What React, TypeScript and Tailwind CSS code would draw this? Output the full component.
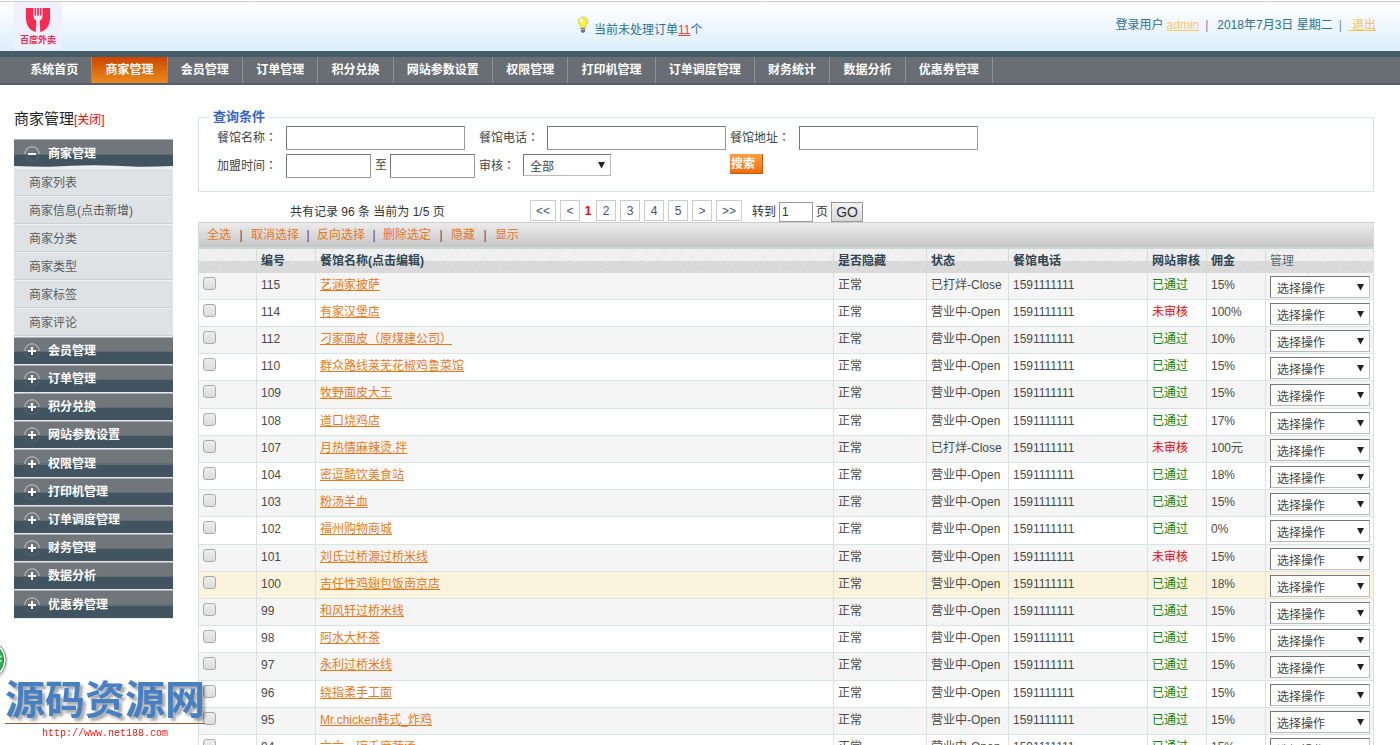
import type { ReactNode } from 'react';

const navItems = [
  '系统首页',
  '商家管理',
  '会员管理',
  '订单管理',
  '积分兑换',
  '网站参数设置',
  '权限管理',
  '打印机管理',
  '订单调度管理',
  '财务统计',
  '数据分析',
  '优惠券管理',
];

const subMenu = ['商家列表', '商家信息(点击新增)', '商家分类', '商家类型', '商家标签', '商家评论'];

const sections = [
  '会员管理',
  '订单管理',
  '积分兑换',
  '网站参数设置',
  '权限管理',
  '打印机管理',
  '订单调度管理',
  '财务管理',
  '数据分析',
  '优惠券管理',
];

type Shop = { id: number; name: string; open: boolean; approved: boolean; fee: string };

const shops: Shop[] = [
  { id: 115, name: '艺涵家披萨', open: false, approved: true, fee: '15%' },
  { id: 114, name: '有家汉堡店', open: true, approved: false, fee: '100%' },
  { id: 112, name: '刁家面皮（原煤建公司）', open: true, approved: true, fee: '10%' },
  { id: 110, name: '群众路线莱芜花椒鸡鲁菜馆', open: true, approved: true, fee: '15%' },
  { id: 109, name: '牧野面皮大王', open: true, approved: true, fee: '15%' },
  { id: 108, name: '道口烧鸡店', open: true, approved: true, fee: '17%' },
  { id: 107, name: '月热情麻辣烫.拌', open: false, approved: false, fee: '100元' },
  { id: 104, name: '密逗酷饮美食站', open: true, approved: true, fee: '18%' },
  { id: 103, name: '粉汤羊血', open: true, approved: true, fee: '15%' },
  { id: 102, name: '福州购物商城', open: true, approved: true, fee: '0%' },
  { id: 101, name: '刘氏过桥源过桥米线', open: true, approved: false, fee: '15%' },
  { id: 100, name: '吉任性鸡翅包饭南京店', open: true, approved: true, fee: '18%' },
  { id: 99, name: '和风轩过桥米线', open: true, approved: true, fee: '15%' },
  { id: 98, name: '阿水大杯茶', open: true, approved: true, fee: '15%' },
  { id: 97, name: '永利过桥米线', open: true, approved: true, fee: '15%' },
  { id: 96, name: '绕指柔手工面', open: true, approved: true, fee: '15%' },
  { id: 95, name: 'Mr.chicken韩式_炸鸡', open: true, approved: true, fee: '15%' },
  { id: 94, name: '六六一碗千度蔬汤', open: true, approved: true, fee: '15%' },
];

function Logo() {
  return (
    <div className="ml-[14px] flex h-12 w-12 flex-col items-center bg-[#eef1fb] pt-[5px]">
      <svg width="26" height="26" viewBox="0 0 26 26" aria-hidden="true">
        <path d="M1 1h24v10c0 8-4 12.500-9.500 14h-5C5 23.500 1 19 1 11z" fill="#fb2a52" />
        <path
          d="M8.500 1h1v7.500h1.600V1h1v7.500h1.800V1h1v7.500h1.600V1h1v8.500c0 2-1 3.200-2.800 4l.6 12h-4.600l.6-12c-1.800-.8-2.800-2-2.800-4z"
          fill="#eef1fb"
        />
      </svg>
      <span className="pt-px text-[9px] leading-[12px] font-bold text-[#f02a50]">百度外卖</span>
    </div>
  );
}

function Bulb() {
  return (
    <svg width="12" height="18" viewBox="0 0 12 18" aria-hidden="true">
      <path
        d="M6 1C3.200 1 1.200 3 1.200 5.600c0 2.400 2.100 3.600 2.500 6.100h4.600c.4-2.500 2.500-3.700 2.500-6.100C10.800 3 8.800 1 6 1z"
        fill="#f8ee45"
        stroke="#c9c56a"
        strokeWidth=".8"
      />
      <ellipse cx="4.500" cy="4.500" rx="1.600" ry="2" fill="#fffde0" />
      <path d="M3.900 12h4.200v3.200L7 16.800H5l-1.100-1.600z" fill="#6f7681" />
      <path d="M3.900 13.500h4.200" stroke="#c3c8cf" strokeWidth=".8" />
    </svg>
  );
}

function ToggleIcon({ open }: { open?: boolean }) {
  return (
    <svg width="16" height="16" viewBox="0 0 16 16" fill="none" aria-hidden="true">
      <path d="M.8 8A7.200 7.200 0 0 1 15.200 8" stroke="#c3c9cc" strokeWidth="1" />
      <path d="M.8 8A7.200 7.200 0 0 0 15.200 8" stroke="#52656f" strokeWidth="1" />
      <path d={open ? 'M4 8h8' : 'M4 8h8M8 4v8'} stroke="#fff" strokeWidth="2" />
    </svg>
  );
}

function SectionHeader({ title, open }: { title: string; open?: boolean }) {
  return (
    <button
      type="button"
      className="flex h-full w-full items-center gap-2 border-t border-[#a9afb3] bg-[linear-gradient(#71767b_0_50%,#5f6e75_50%_54%,#41545f_54%)] pl-[10px] text-left font-bold text-white"
    >
      <ToggleIcon open={open} />
      {title}
    </button>
  );
}

function Sidebar() {
  return (
    <aside className="w-[159px] shrink-0">
      <h1 className="mb-[10px] text-[15px] leading-5 text-[#222]">
        商家管理
        <a href="#close" className="text-xs text-[#f00]">
          [关闭]
        </a>
      </h1>
      <div className="relative h-7">
        <SectionHeader title="商家管理" open />
        <svg
          className="absolute bottom-0 left-0 h-[2px] w-full"
          viewBox="0 0 159 2"
          preserveAspectRatio="none"
          aria-hidden="true"
        >
          <path d="M0 2V1Q20 2 36 1.800Q80-1.500 124 1.800Q140 2 159 1V2z" fill="#eef0f1" />
        </svg>
      </div>
      <ul className="border-y border-[#eceeef]">
        {subMenu.map((item) => (
          <li
            key={item}
            className="h-7 border-t border-b border-t-[#eef0f1] border-b-[#cdcfd0] bg-[#dfe2e4]"
          >
            <a href="#menu" className="block pl-[15px] leading-7 text-[#555d62]">
              {item}
            </a>
          </li>
        ))}
      </ul>
      <ul>
        {sections.map((item) => (
          <li key={item} className="h-7 border-b border-[#e4e8ea] nth-[5n]:h-[29px]">
            <SectionHeader title={item} />
          </li>
        ))}
      </ul>
    </aside>
  );
}

function Arrow() {
  return (
    <svg
      className="pointer-events-none absolute top-2 right-[6px]"
      width="7"
      height="7"
      viewBox="0 0 7 7"
      aria-hidden="true"
    >
      <path d="M0 0h7L3.500 6.500z" fill="#222" />
    </svg>
  );
}

function Select({ id, label, value, width }: { id: string; label?: string; value: string; width: string }) {
  return (
    <span className={`relative block ${width}`}>
      <select
        id={id}
        aria-label={label}
        className="block h-[22px] w-full appearance-none border border-t-[#777] border-r-[#bbb] border-b-[#bbb] border-l-[#777] bg-white pt-[3px] pl-[6px] text-xs leading-4 text-[#444]"
      >
        <option>{value}</option>
      </select>
      <Arrow />
    </span>
  );
}

function FieldLabel({ id, children, width }: { id: string; children: ReactNode; width: string }) {
  return (
    <label htmlFor={id} className={`shrink-0 leading-[22px] ${width}`}>
      {children}
      <span className="font-['Noto_Sans_CJK_TC',sans-serif]">：</span>
    </label>
  );
}

const inputClass = 'h-6 border border-t-[#777] border-r-[#999] border-b-[#999] border-l-[#777] bg-white px-1';

function SearchForm() {
  return (
    <fieldset className="h-[83px] border border-[#d9e2ea] pl-[10px]">
      <legend className="px-1 text-[13px] leading-4 font-bold text-[#36c]">查询条件</legend>
      <div className="grid grid-cols-[262px_251px_1fr] gap-y-1 pt-px pl-2 text-[#444]">
        <div className="flex">
          <FieldLabel id="name" width="w-[69px]">餐馆名称</FieldLabel>
          <input id="name" className={`w-[179px] ${inputClass}`} />
        </div>
        <div className="flex">
          <FieldLabel id="phone" width="w-[68px]">餐馆电话</FieldLabel>
          <input id="phone" className={`w-[179px] ${inputClass}`} />
        </div>
        <div className="flex">
          <FieldLabel id="address" width="w-[69px]">餐馆地址</FieldLabel>
          <input id="address" className={`w-[179px] ${inputClass}`} />
        </div>
        <div className="flex">
          <FieldLabel id="from" width="w-[69px]">加盟时间</FieldLabel>
          <input id="from" className={`w-[85px] ${inputClass}`} />
          <label htmlFor="to" className="pr-[3px] pl-1 leading-[22px]">至</label>
          <input id="to" className={`w-[85px] ${inputClass}`} />
        </div>
        <div className="flex">
          <FieldLabel id="audit" width="w-[44px]">审核</FieldLabel>
          <Select id="audit" value="全部" width="w-[88px]" />
        </div>
        <div>
          <button
            type="button"
            className="block h-5 w-[33px] border-r border-b border-[#c25a10] bg-linear-to-b from-[#ffa040] to-[#f26a08] pl-px text-left leading-5 font-bold text-white"
          >
            搜索
          </button>
        </div>
      </div>
    </fieldset>
  );
}

function PageLink({ children, wide }: { children: ReactNode; wide?: boolean }) {
  return (
    <a
      href="#page"
      className={`block h-[21px] border border-[#ccc] text-center leading-[21px] text-[#4a5080] ${wide ? 'w-[26px]' : 'w-5'}`}
    >
      {children}
    </a>
  );
}

function Pagination() {
  return (
    <div className="flex h-[30px] items-start pt-2 pl-[92px] text-[#333]">
      <p className="w-[240px] leading-6">共有记录 96 条 当前为 1/5 页</p>
      <nav className="flex gap-1 text-xs">
        <PageLink wide>&lt;&lt;</PageLink>
        <PageLink>&lt;</PageLink>
        <span className="w-2 text-center leading-[23px] font-bold text-[#f00]">1</span>
        <PageLink>2</PageLink>
        <PageLink>3</PageLink>
        <PageLink>4</PageLink>
        <PageLink>5</PageLink>
        <PageLink>&gt;</PageLink>
        <PageLink wide>&gt;&gt;</PageLink>
      </nav>
      <label htmlFor="goto" className="pl-[10px] leading-6">转到</label>
      <input
        id="goto"
        defaultValue="1"
        className="mt-0.5 ml-[3px] h-5 w-[34px] border border-[#999] bg-white px-0.5 text-xs"
      />
      <span className="px-[3px] leading-6">页</span>
      <button
        type="button"
        className="mt-0.5 h-5 w-8 border border-[#999] bg-linear-to-b from-[#f3f3f3] to-[#d8d8d8] text-sm leading-[18px]"
      >
        GO
      </button>
    </div>
  );
}

const actions = [
  { text: '全选', gap: 'w-5' },
  { text: '取消选择', gap: 'w-[18px]' },
  { text: '反向选择', gap: 'w-[18px]' },
  { text: '删除选定', gap: 'w-5' },
  { text: '隐藏', gap: 'w-5' },
  { text: '显示', gap: '' },
];

function Toolbar() {
  return (
    <div className="flex h-[27px] border border-t-[#ccc] border-r-[#d6dcdc] border-b-2 border-b-[#cdd5d5] border-l-[#d6dcdc] bg-linear-to-b from-[#ececec] to-[#c6c6c6] pl-2 leading-6">
      {actions.map(({ text, gap }) => (
        <span key={text} className="flex">
          <a href="#action" className="text-[#e8791e]">
            {text}
          </a>
          {gap && <span className={`text-center text-[#736]  ${gap}`}>|</span>}
        </span>
      ))}
    </div>
  );
}

const headCell = 'border-l border-[#d3dada] px-1 text-left font-bold text-[#2f4552]';
const cell = 'border-b border-l border-[#dbe2e2] px-1 pt-1 align-top leading-4 whitespace-nowrap';

function ShopTable() {
  return (
    <table className="w-full table-fixed border-separate border-spacing-0 border-r border-[#dbe2e2] text-[#4a4a4a]">
      <colgroup>
        <col className="w-[58px]" />
        <col className="w-[59px]" />
        <col />
        <col className="w-[93px]" />
        <col className="w-[82px]" />
        <col className="w-[139px]" />
        <col className="w-[59px]" />
        <col className="w-[59px]" />
        <col className="w-[108px]" />
      </colgroup>
      <thead>
        <tr className="h-6 bg-[repeating-linear-gradient(135deg,rgba(160,160,160,0.12)_0_1px,transparent_1px_3px),linear-gradient(#f3f3f3_0_50%,#dcdcdc_50%)]">
          <th className={headCell} aria-label="选择" />
          <th className={headCell}>编号</th>
          <th className={headCell}>餐馆名称(点击编辑)</th>
          <th className={headCell}>是否隐藏</th>
          <th className={headCell}>状态</th>
          <th className={headCell}>餐馆电话</th>
          <th className={headCell}>网站审核</th>
          <th className={headCell}>佣金</th>
          <th className="border-l border-[#d3dada] px-1 text-left font-normal text-[#5a6a72]">管理</th>
        </tr>
      </thead>
      <tbody>
        {shops.map((shop) => (
          <tr
            key={shop.id}
            className={`h-[27px] nth-[5n]:h-7 ${shop.id === 100 ? 'bg-[#fbf4dd]' : 'odd:bg-[#f5f5f5]'}`}
          >
            <td className={cell}>
              <input
                type="checkbox"
                aria-label={`选择 ${shop.name}`}
                className="block h-[13px] w-[13px] appearance-none rounded-[3px] border border-[#aaa] bg-linear-to-b from-[#eee] to-[#dcdcdc]"
              />
            </td>
            <td className={cell}>{shop.id}</td>
            <td className={cell}>
              <a href="#edit" className="text-[#ea7a20] underline">
                {shop.name}
              </a>
            </td>
            <td className={cell}>正常</td>
            <td className={cell}>{shop.open ? '营业中-Open' : '已打烊-Close'}</td>
            <td className={cell}>1591111111</td>
            <td className={cell}>
              <span className={shop.approved ? 'text-[#0a840a]' : 'text-[#f00]'}>
                {shop.approved ? '已通过' : '未审核'}
              </span>
            </td>
            <td className={cell}>{shop.fee}</td>
            <td className="border-b border-l border-[#dbe2e2] pt-[3px] pr-[3px] pl-1 align-top">
              <Select id={`op-${shop.id}`} label={`操作 ${shop.name}`} value="选择操作" width="w-full" />
            </td>
          </tr>
        ))}
      </tbody>
    </table>
  );
}

export default function App() {
  return (
    <div className="h-screen overflow-hidden bg-white font-['Liberation_Sans','Noto_Sans_CJK_SC',sans-serif] text-xs">
      <header>
        <div className="mt-px flex h-[50px] items-start border-t border-[#ccc] bg-linear-to-b from-white to-[#dceefb] text-[#2f6f96]">
          <div className="w-[41%]">
            <Logo />
          </div>
          <div className="flex gap-[5px] pt-[14px] pl-[3px]">
            <Bulb />
            <p className="pt-1 leading-5">
              当前未处理订单
              <a href="#orders" className="text-[#ff3b3b] underline">
                11
              </a>
              个
            </p>
          </div>
          <div className="flex flex-1 justify-end pt-[13px] pr-6 leading-5">
            <span>登录用户</span>
            <a href="#admin" className="ml-[3px] text-[#ffc66e] underline">
              admin
            </a>
            <span className="w-[18px] pl-[6px] text-[#789]">|</span>
            <span>2018年7月3日 星期二</span>
            <span className="w-4 pl-[6px] text-[#789]">|</span>
            <a href="#logout" className="whitespace-pre text-[#ffbe55] underline">
              {' 退出'}
            </a>
          </div>
        </div>
        <nav className="border-t-[6px] border-b-2 border-t-[#445d67] border-b-[#55616a] bg-[#686e74] pl-[17px]">
          <ul className="flex h-[26px] w-[976px]">
            {navItems.map((item) => (
              <li key={item} className="flex grow">
                <a
                  href="#nav"
                  className={`grow border-r border-[#8b9195] text-center leading-[26px] font-bold text-white ${
                    item === '商家管理' ? 'bg-linear-to-b from-[#cc4400] to-[#ea8a1c]' : ''
                  }`}
                >
                  {item}
                </a>
              </li>
            ))}
          </ul>
        </nav>
      </header>

      <div className="flex gap-[25px] pt-6 pr-[26px] pl-[14px]">
        <Sidebar />
        <main className="min-w-0 flex-1">
          <SearchForm />
          <Pagination />
          <Toolbar />
          <ShopTable />
        </main>
      </div>

      <svg
        className="fixed bottom-[60px] left-0"
        width="10"
        height="50"
        viewBox="0 0 10 50"
        aria-hidden="true"
      >
        <circle cx="-14" cy="26" r="22" fill="#000" opacity=".12" />
        <circle cx="-14" cy="25" r="20" fill="#fff" stroke="#8a8a8a" />
        <circle cx="-14" cy="25" r="17.500" fill="#2fb44c" stroke="#1c8a3a" />
        <path d="M0 21.500h1.500M0 26h1.500" stroke="#fff" strokeWidth="1.500" />
      </svg>
      <div className="fixed bottom-1 left-[5px] w-[200px]">
        <p className="border-b border-[#8a5a3a] text-center text-[40px] leading-[46px] font-bold whitespace-nowrap text-[#4680c2] [text-shadow:3px_3px_3px_rgba(0,0,0,0.35)]">
          源码资源网
        </p>
        <p className="pt-[3px] text-center font-['Liberation_Mono',monospace] text-[10px] leading-[14px] text-[#f01818]">
          http://www.net188.com
        </p>
      </div>
    </div>
  );
}
